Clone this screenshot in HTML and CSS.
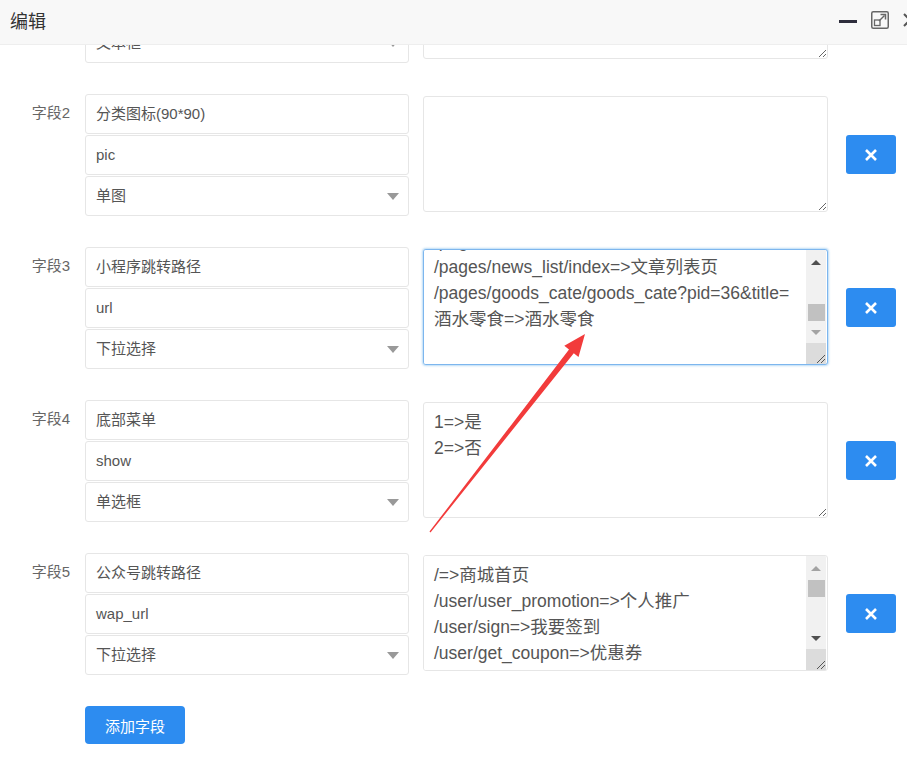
FILE: index.html
```html
<!DOCTYPE html>
<html lang="zh-CN">
<head>
    <meta charset="UTF-8">
    <title>编辑</title>
    <link rel="stylesheet" href="styles.css">
</head>
<body>

<div class="layer">
    <header class="layer-title">
        <span class="title-text">编辑</span>
        <div class="title-tools">
            <span class="tool-min"></span>
            <svg class="tool-max" width="18" height="18" viewBox="0 0 18 18">
                <rect x="0.75" y="0.75" width="16.5" height="16.5" rx="1.5" fill="none" stroke="#666" stroke-width="1.5"/>
                <rect x="3.5" y="9" width="5.5" height="5.5" fill="none" stroke="#666" stroke-width="1.3"/>
                <path d="M8 10 L13.5 4.5" stroke="#666" stroke-width="1.5"/>
                <path d="M9.5 3.5 H14.5 V8.5" fill="none" stroke="#666" stroke-width="1.5"/>
            </svg>
            <svg class="tool-close" width="14" height="14" viewBox="0 0 14 14">
                <path d="M1 1 L13 13 M13 1 L1 13" stroke="#555" stroke-width="2"/>
            </svg>
        </div>
    </header>

    <div class="layer-content">
        <div class="field-list">

            <!-- 字段1 -->
            <div class="field-row">
                <div class="field-label">字段1</div>
                <div class="field-inputs">
                    <div class="ipt">标题</div>
                    <div class="ipt">title</div>
                    <div class="ipt select"><span>文本框</span><i class="caret"></i></div>
                </div>
                <textarea class="area"></textarea>
                <button class="del-btn"><svg width="14" height="14" viewBox="0 0 14 14"><path d="M2 2 L12 12 M12 2 L2 12" stroke="#fff" stroke-width="2.6"/></svg></button>
            </div>

            <!-- 字段2 -->
            <div class="field-row">
                <div class="field-label">字段2</div>
                <div class="field-inputs">
                    <div class="ipt">分类图标(90*90)</div>
                    <div class="ipt">pic</div>
                    <div class="ipt select"><span>单图</span><i class="caret"></i></div>
                </div>
                <textarea class="area"></textarea>
                <button class="del-btn"><svg width="14" height="14" viewBox="0 0 14 14"><path d="M2 2 L12 12 M12 2 L2 12" stroke="#fff" stroke-width="2.6"/></svg></button>
            </div>

            <!-- 字段3 -->
            <div class="field-row">
                <div class="field-label">字段3</div>
                <div class="field-inputs">
                    <div class="ipt">小程序跳转路径</div>
                    <div class="ipt">url</div>
                    <div class="ipt select"><span>下拉选择</span><i class="caret"></i></div>
                </div>
                <div class="area-box focus">
                    <textarea class="area-inner" id="pathArea">/pages/index/index=>商城首页
/pages/user/index=>个人中心
/pages/news_list/index=>文章列表页
/pages/goods_cate/goods_cate?pid=36&amp;title=
酒水零食=>酒水零食


</textarea>
                    <div class="scrollbar">
                        <span class="sb-btn"><i class="arr-up dark"></i></span>
                        <span class="sb-track"><span class="sb-thumb low"></span></span>
                        <span class="sb-btn down"><i class="arr-down"></i></span>
                        <span class="sb-corner"></span>
                    </div>
                </div>
                <button class="del-btn"><svg width="14" height="14" viewBox="0 0 14 14"><path d="M2 2 L12 12 M12 2 L2 12" stroke="#fff" stroke-width="2.6"/></svg></button>
            </div>

            <!-- 字段4 -->
            <div class="field-row">
                <div class="field-label">字段4</div>
                <div class="field-inputs">
                    <div class="ipt">底部菜单</div>
                    <div class="ipt">show</div>
                    <div class="ipt select"><span>单选框</span><i class="caret"></i></div>
                </div>
                <textarea class="area">1=>是
2=>否</textarea>
                <button class="del-btn"><svg width="14" height="14" viewBox="0 0 14 14"><path d="M2 2 L12 12 M12 2 L2 12" stroke="#fff" stroke-width="2.6"/></svg></button>
            </div>

            <!-- 字段5 -->
            <div class="field-row">
                <div class="field-label">字段5</div>
                <div class="field-inputs">
                    <div class="ipt">公众号跳转路径</div>
                    <div class="ipt">wap_url</div>
                    <div class="ipt select"><span>下拉选择</span><i class="caret"></i></div>
                </div>
                <div class="area-box">
                    <textarea class="area-inner">/=>商城首页
/user/user_promotion=>个人推广
/user/sign=>我要签到
/user/get_coupon=>优惠券
/user/user=>个人中心
/user/cart=>购物车</textarea>
                    <div class="scrollbar">
                        <span class="sb-btn"><i class="arr-up"></i></span>
                        <span class="sb-track"><span class="sb-thumb"></span></span>
                        <span class="sb-btn down"><i class="arr-down dark"></i></span>
                        <span class="sb-corner"></span>
                    </div>
                </div>
                <button class="del-btn"><svg width="14" height="14" viewBox="0 0 14 14"><path d="M2 2 L12 12 M12 2 L2 12" stroke="#fff" stroke-width="2.6"/></svg></button>
            </div>

            <div class="add-row">
                <button class="add-btn">添加字段</button>
            </div>
        </div>
    </div>

    <!-- 标注箭头 -->
    <svg class="mark-arrow" width="907" height="758" viewBox="0 0 907 758">
        <polygon points="429.5,531.6 569.0,349.5 564.3,345.8 585,334 578.5,356.9 573.8,353.2 430.5,532.4" fill="#f23b3b"/>
    </svg>
</div>

<script>
    document.getElementById('pathArea').scrollTop = 54;
</script>

</body>
</html>
```

FILE: styles.css
```css
* {
    margin: 0;
    padding: 0;
    box-sizing: border-box;
}

body {
    font-family: "Liberation Sans", "Noto Sans CJK SC", sans-serif;
    background: #fff;
    color: #555;
    overflow: hidden;
}

.layer {
    position: relative;
    width: 907px;
    height: 758px;
    overflow: hidden;
}

/* 标题栏 */
.layer-title {
    display: flex;
    align-items: center;
    height: 45px;
    padding-left: 10px;
    background: #f8f8f8;
    border-bottom: 1px solid #eee;
    overflow: hidden;
}

.title-text {
    font-size: 18px;
    color: #333;
    padding-bottom: 5px;
}

.title-tools {
    display: flex;
    align-items: center;
    margin-left: auto;
    margin-right: -10px;
    gap: 14px;
    padding-bottom: 5px;
}

.tool-min {
    display: block;
    width: 18px;
    height: 3px;
    background: #2e2d3c;
    margin-top: 4px;
}

/* 内容区 */
.layer-content {
    height: 713px;
    overflow: hidden;
}

.field-list {
    margin-top: -104px;
}

.field-row {
    display: flex;
    align-items: flex-start;
    margin-bottom: 31px;
}

.field-label {
    width: 85px;
    padding-right: 15px;
    text-align: right;
    font-size: 15px;
    line-height: 38px;
    color: #666;
}

.field-inputs {
    width: 324px;
}

.ipt {
    height: 40px;
    margin-bottom: 1px;
    padding: 0 10px;
    border: 1px solid #e6e6e6;
    border-radius: 3px;
    font-size: 15px;
    line-height: 38px;
    color: #555;
}

.ipt:last-child {
    margin-bottom: 0;
}

.select {
    display: flex;
    align-items: center;
    justify-content: space-between;
    padding-right: 9px;
}

.caret {
    width: 0;
    height: 0;
    border-left: 6px solid transparent;
    border-right: 6px solid transparent;
    border-top: 7px solid #999;
}

.area {
    width: 405px;
    height: 116px;
    margin: 2px 0 0 14px;
    padding: 6px 10px;
    border: 1px solid #e6e6e6;
    border-radius: 3px;
    font-family: inherit;
    font-size: 17.5px;
    line-height: 26px;
    color: #555;
    outline: none;
    resize: vertical;
    overflow: hidden;
}

.area-box {
    display: flex;
    width: 405px;
    height: 116px;
    margin: 2px 0 0 14px;
    border: 1px solid #e6e6e6;
    border-radius: 3px;
    overflow: hidden;
    background: #fff;
}

.area-box.focus {
    border-color: #7db6ee;
    box-shadow: 0 0 2px 1px rgba(102, 175, 233, 0.45);
}

.area-inner {
    flex: 1;
    padding: 6px 2px 6px 10px;
    border: none;
    font-family: inherit;
    font-size: 17.5px;
    line-height: 26px;
    color: #555;
    outline: none;
    resize: none;
    overflow: hidden;
}

/* 模拟滚动条 */
.scrollbar {
    display: flex;
    flex-direction: column;
    width: 20px;
    margin-right: 1px;
    background: #f1f1f1;
}

.sb-btn {
    display: flex;
    align-items: center;
    justify-content: center;
    height: 24px;
}

.sb-btn.down {
    height: 22px;
}

.arr-up,
.arr-down {
    width: 0;
    height: 0;
    border-left: 5px solid transparent;
    border-right: 5px solid transparent;
}

.arr-up {
    border-bottom: 5px solid #a3a3a3;
}

.arr-down {
    border-top: 5px solid #a3a3a3;
}

.arr-up.dark {
    border-bottom-color: #505050;
}

.arr-down.dark {
    border-top-color: #505050;
}

.sb-track {
    flex: 1;
    display: flex;
    flex-direction: column;
    align-items: center;
}

.sb-thumb {
    width: 17px;
    height: 17px;
    background: #c1c1c1;
}

.sb-thumb.low {
    margin-top: 30px;
}

.sb-corner {
    height: 21px;
    background:
        linear-gradient(135deg, transparent 0 62%, #555 62% 68%, transparent 68% 80%, #555 80% 86%, transparent 86%) right 1px bottom 1px / 11px 11px no-repeat,
        #dcdcdc;
}

/* 按钮 */
.del-btn {
    display: flex;
    align-items: center;
    justify-content: center;
    width: 50px;
    height: 39px;
    margin: 41px 0 0 18px;
    border: none;
    border-radius: 3px;
    background: #2d8cf0;
    cursor: pointer;
}

.add-row {
    padding-left: 85px;
    margin-top: 1px;
}

.add-btn {
    width: 100px;
    height: 38px;
    border: none;
    border-radius: 4px;
    background: #2d8cf0;
    color: #fff;
    font-family: inherit;
    font-size: 15px;
    cursor: pointer;
}

.mark-arrow {
    position: absolute;
    left: 0;
    top: 0;
    pointer-events: none;
}
```
